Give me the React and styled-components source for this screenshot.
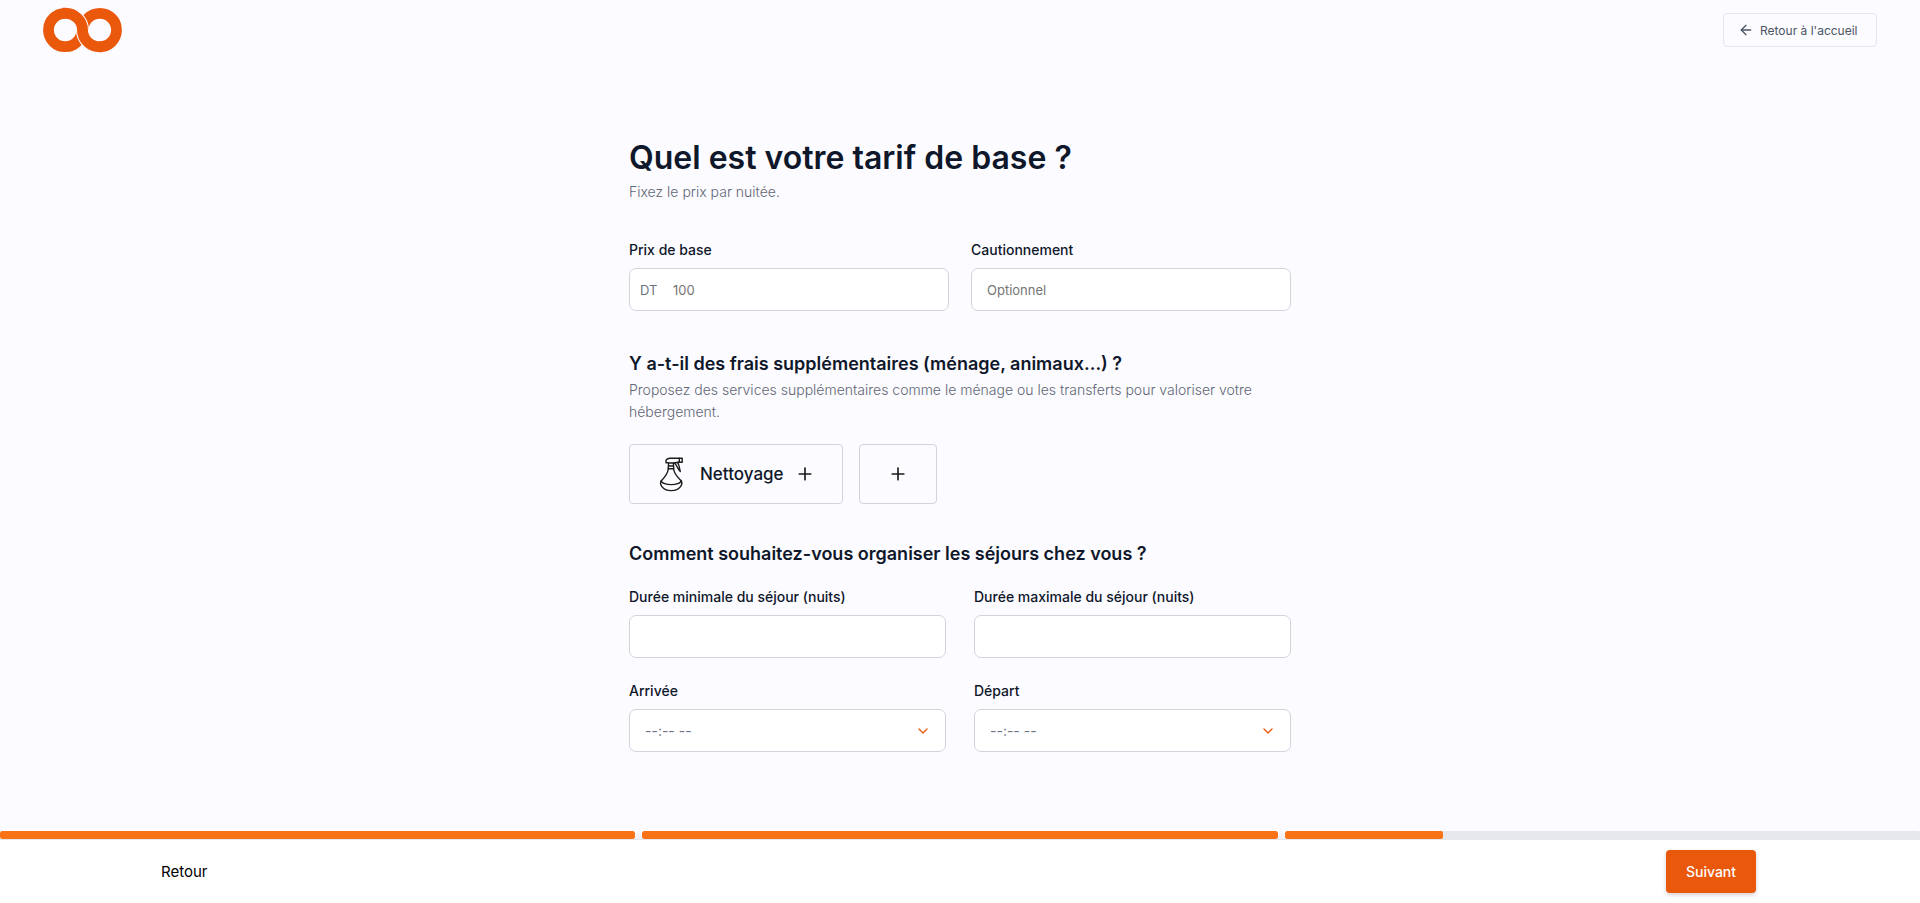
import React from "react";
import styled, { createGlobalStyle } from "styled-components";
import { ArrowLeft, ChevronDown, Plus } from "lucide-react";

const GlobalStyle = createGlobalStyle`
  *, *::before, *::after { box-sizing: border-box; }
  body {
    margin: 0;
    background: #fcfbff;
    color: #0f172a;
    font-family: Inter, "Liberation Sans", sans-serif;
  }
  h1, h2, p { margin: 0; }
  button, input, select { font: inherit; color: inherit; }
  button { cursor: pointer; }
`;

const Page = styled.div`
  display: flex;
  flex-direction: column;
  min-height: 100vh;
`;

const Header = styled.header`
  display: flex;
  align-items: center;
  justify-content: space-between;
  height: 60px;
  padding: 0 43px;
`;

const LogoLink = styled.a`
  display: flex;
`;

const HomeButton = styled.button`
  display: flex;
  align-items: center;
  gap: 6px;
  min-width: 154px;
  height: 34px;
  padding: 0 14px;
  border: 1px solid #e5e7eb;
  border-radius: 4px;
  background: transparent;
  color: #4b5563;
  font-size: 12px;
`;

const Main = styled.main`
  flex: 1;
  width: 100%;
  max-width: 662px;
  margin: 0 auto;
  padding: 76px 0;
`;

const Title = styled.h1`
  font-size: 32px;
  line-height: 44px;
  font-weight: 600;
`;

const Description = styled.p`
  margin-top: 1px;
  color: #5f6774;
  font-size: 14px;
  line-height: 22px;
  font-weight: 300;
`;

const Section = styled.section`
  margin-top: ${(p) => p.$space}px;
`;

const SectionTitle = styled.h2`
  font-size: 18px;
  line-height: 28px;
  font-weight: 600;
`;

const FieldGrid = styled.div`
  display: grid;
  grid-template-columns: 1fr 1fr;
  gap: 23px ${(p) => p.$gap}px;
`;

const StayGrid = styled(FieldGrid)`
  margin-top: 19px;
`;

const Field = styled.div`
  display: flex;
  flex-direction: column;
  gap: 8px;
`;

const Label = styled.label`
  font-size: 14px;
  line-height: 20px;
  font-weight: 500;
`;

const Control = styled.div`
  position: relative;
  display: flex;
  align-items: center;
  height: 43px;
  border: 1px solid #d1d5db;
  border-radius: 7px;
  background: #ffffff;
  color: #6b7280;
  font-size: 13px;
`;

const Prefix = styled.span`
  width: 18px;
  margin-left: 10px;
`;

const TextInput = styled.input`
  flex: 1;
  min-width: 0;
  height: 100%;
  padding: 0 15px;
  border: 0;
  border-radius: 7px;
  outline: 0;
  background: transparent;

  &::placeholder { color: #757575; opacity: 1; }
`;

const TimeSelect = styled.select`
  width: 100%;
  height: 100%;
  padding: 0 15px;
  border: 0;
  border-radius: 7px;
  outline: 0;
  background: transparent;
  font-size: 14px;
  appearance: none;
`;

const SelectArrow = styled(ChevronDown)`
  position: absolute;
  right: 14px;
  color: #ea580c;
  pointer-events: none;
`;

const Services = styled.div`
  display: flex;
  gap: 16px;
  margin-top: 21px;
`;

const ServiceButton = styled.button`
  display: flex;
  align-items: center;
  justify-content: center;
  gap: 11px;
  height: 60px;
  padding: ${(p) => (p.$iconOnly ? "0 28px" : "0 27px 0 23px")};
  border: 1px solid #d1d5db;
  border-radius: 4px;
  background: transparent;
  font-size: 17px;
  font-weight: 500;

  svg { color: #1c1c1c; }
`;

const Footer = styled.footer`
  position: sticky;
  bottom: 0;
`;

const Steps = styled.div`
  display: grid;
  grid-template-columns: repeat(3, 1fr);
  gap: 7px;
  background: linear-gradient(#fcfbff, #eeeef2);
`;

const Step = styled.div`
  height: 8px;
  border-radius: 2px;
  overflow: hidden;
  background: #e5e7eb;
`;

const StepFill = styled.div`
  width: ${(p) => p.$value}%;
  height: 100%;
  border-radius: 2px;
  background: #f97316;
`;

const Actions = styled.div`
  display: flex;
  align-items: center;
  justify-content: space-between;
  height: 64px;
  padding: 0 164px 0 161px;
  border-top: 1px solid #e5e7eb;
  background: #ffffff;
`;

const BackButton = styled.button`
  padding: 0;
  border: 0;
  background: transparent;
  color: #000000;
  font-size: 15px;
`;

const NextButton = styled.button`
  min-width: 90px;
  height: 43px;
  border: 0;
  border-radius: 4px;
  background: #ea580c;
  box-shadow: 0 2px 4px rgba(0, 0, 0, 0.18);
  color: #ffffff;
  font-size: 14px;
  font-weight: 500;
`;

const Logo = () => (
  <svg width="80" height="46" viewBox="0 0 80 46" fill="none" aria-hidden="true">
    <circle cx="22.2" cy="23" r="16.7" stroke="#ea580c" strokeWidth="10.8" />
    <circle cx="56.8" cy="23" r="16.7" stroke="#ea580c" strokeWidth="10.8" />
    <path d="M22.2 6.3A17.3 16.7 0 0 1 39.5 23A17.3 16.7 0 0 0 56.8 39.7" stroke="#fcfbff" strokeWidth="13" />
    <path d="M19.5 6.3H22.2A17.3 16.7 0 0 1 39.5 23A17.3 16.7 0 0 0 56.8 39.7H59.5" stroke="#ea580c" strokeWidth="10.9" />
  </svg>
);

const SprayIcon = () => (
  <svg
    width="36"
    height="36"
    viewBox="0 0 36 36"
    fill="none"
    stroke="currentColor"
    strokeWidth="1.4"
    strokeLinecap="round"
    strokeLinejoin="round"
    aria-hidden="true"
  >
    <path d="M15.3 6.8H13V4.4C13.8 2.6 15 2.2 17 2.2H29.2V6.2H25L20.8 7H15.3Z" />
    <path d="M26.3 2.2V6.2" />
    <path d="M15.6 7.3L15.2 12.7H20.7L20.4 7.3M15.5 10H20.5" />
    <path d="M21.6 7.2C23.8 8.6 24 12.4 27.3 15.6C26.3 12.6 26.6 9 24.6 6.5" />
    <path d="M15.3 13C14.8 17.4 11.8 21.2 8.4 24.8M20.6 13C21.2 17.4 24.4 21.2 28.1 24.8" />
    <path d="M8 25.2C11 29.8 25.4 29.8 28.4 25.2" />
    <path d="M8.4 24.6C6.4 27.4 8.4 34.6 18.2 34.6S30 27.4 28.1 24.6" />
  </svg>
);

const TimeField = ({ id, label }) => (
  <Field>
    <Label htmlFor={id}>{label}</Label>
    <Control>
      <TimeSelect id={id} defaultValue="">
        <option value="">--:-- --</option>
      </TimeSelect>
      <SelectArrow size={16} strokeWidth={2} aria-hidden="true" />
    </Control>
  </Field>
);

const NumberField = ({ id, label, prefix, placeholder }) => (
  <Field>
    <Label htmlFor={id}>{label}</Label>
    <Control>
      {prefix && <Prefix>{prefix}</Prefix>}
      <TextInput id={id} type="text" inputMode="numeric" placeholder={placeholder} />
    </Control>
  </Field>
);

const progress = [100, 100, 25];

export default function App() {
  return (
    <Page>
      <GlobalStyle />
      <Header>
        <LogoLink href="#" aria-label="Accueil">
          <Logo />
        </LogoLink>
        <HomeButton type="button">
          <ArrowLeft size={16} strokeWidth={2} aria-hidden="true" />
          Retour à l'accueil
        </HomeButton>
      </Header>

      <Main>
        <Title>Quel est votre tarif de base ?</Title>
        <Description>Fixez le prix par nuitée.</Description>

        <Section $space={37}>
          <FieldGrid $gap={22}>
            <NumberField id="price" label="Prix de base" prefix="DT" placeholder="100" />
            <NumberField id="deposit" label="Cautionnement" placeholder="Optionnel" />
          </FieldGrid>
        </Section>

        <Section $space={39}>
          <SectionTitle>Y a-t-il des frais supplémentaires (ménage, animaux…) ?</SectionTitle>
          <Description>
            Proposez des services supplémentaires comme le ménage ou les transferts pour valoriser votre hébergement.
          </Description>
          <Services>
            <ServiceButton type="button">
              <SprayIcon />
              Nettoyage
              <Plus size={20} strokeWidth={2} aria-hidden="true" />
            </ServiceButton>
            <ServiceButton type="button" $iconOnly aria-label="Ajouter un service">
              <Plus size={20} strokeWidth={2} aria-hidden="true" />
            </ServiceButton>
          </Services>
        </Section>

        <Section $space={36}>
          <SectionTitle>Comment souhaitez-vous organiser les séjours chez vous ?</SectionTitle>
          <StayGrid $gap={28}>
            <NumberField id="min-nights" label="Durée minimale du séjour (nuits)" />
            <NumberField id="max-nights" label="Durée maximale du séjour (nuits)" />
            <TimeField id="arrival" label="Arrivée" />
            <TimeField id="departure" label="Départ" />
          </StayGrid>
        </Section>
      </Main>

      <Footer>
        <Steps>
          {progress.map((value, index) => (
            <Step key={index}>
              <StepFill $value={value} />
            </Step>
          ))}
        </Steps>
        <Actions>
          <BackButton type="button">Retour</BackButton>
          <NextButton type="button">Suivant</NextButton>
        </Actions>
      </Footer>
    </Page>
  );
}
